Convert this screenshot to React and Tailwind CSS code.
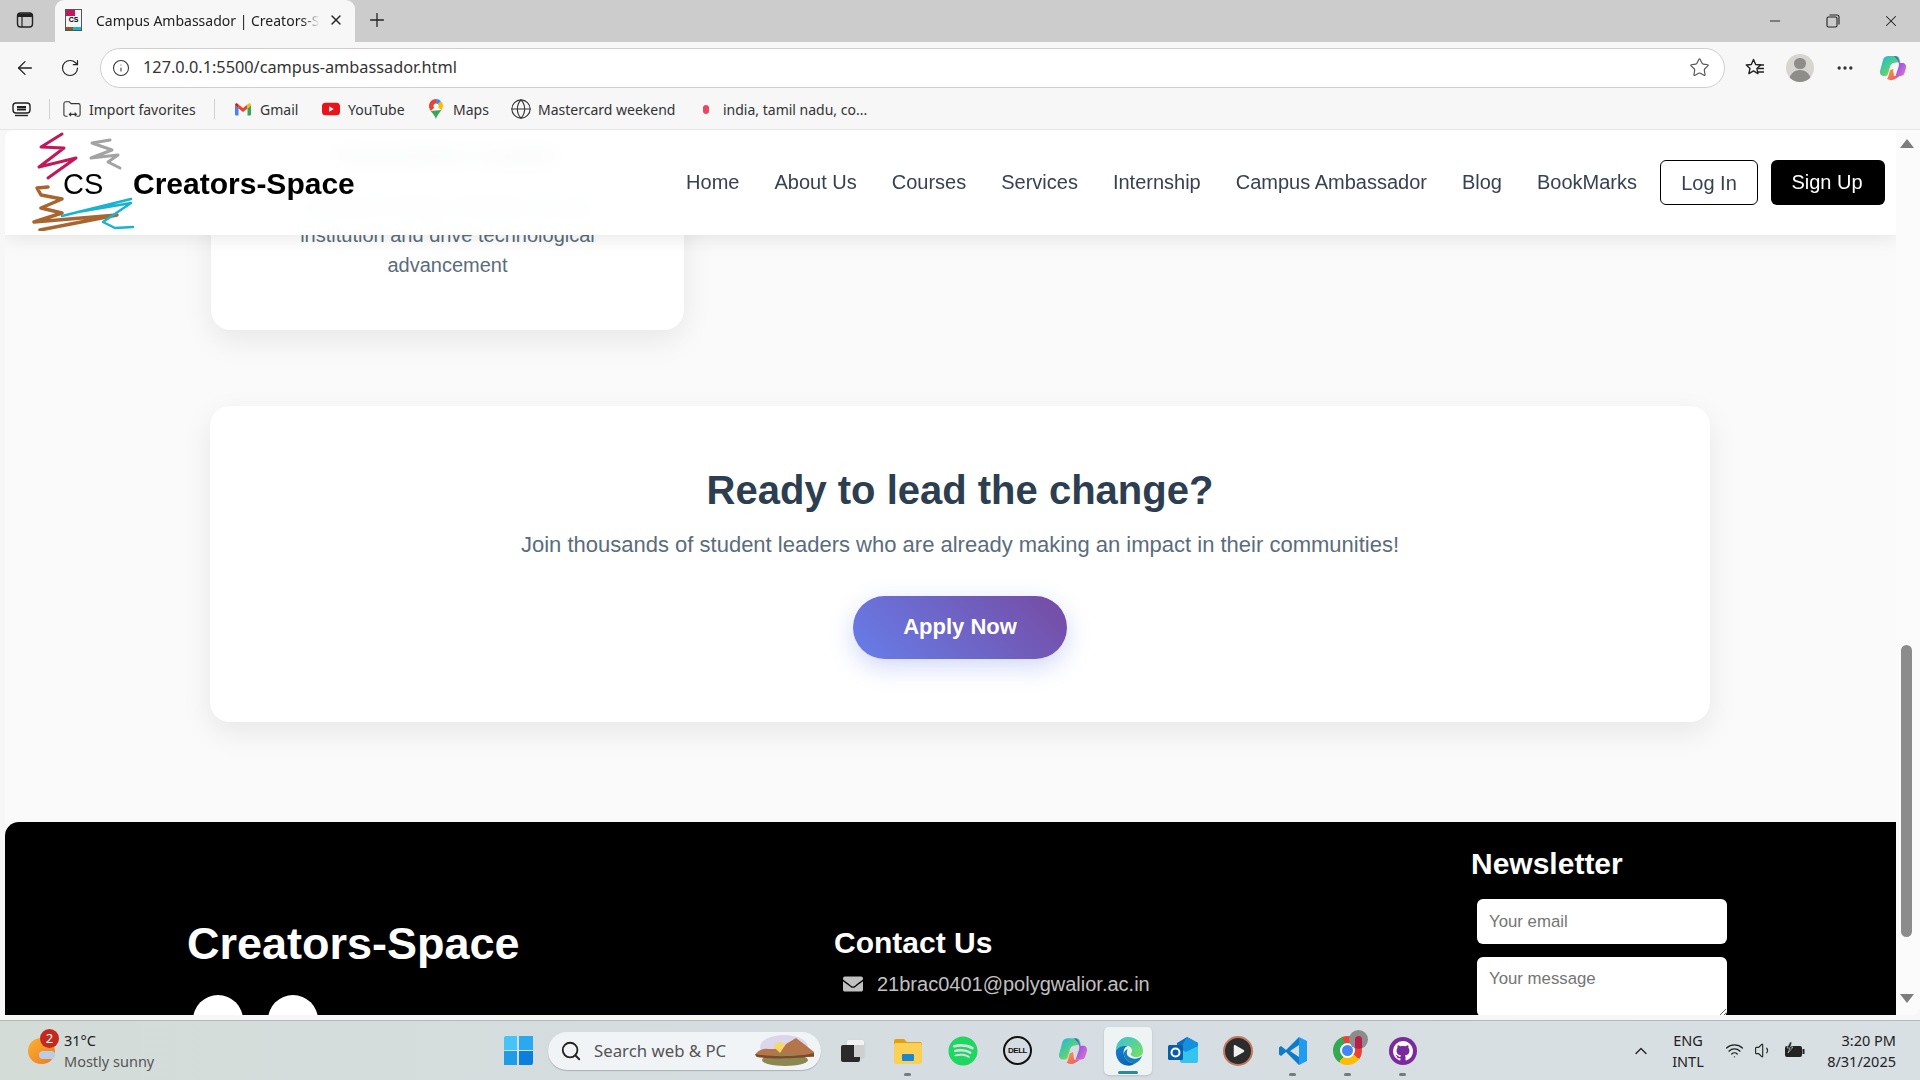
import { ArrowLeft, RotateCw, Info, Star, Plus, X, Minus, Search, ChevronUp, Wifi, Volume1, Globe, MoreHorizontal } from "lucide-react";
import { FaSpotify, FaEnvelope, FaPlay } from "react-icons/fa";
import { VscGithubInverted } from "react-icons/vsc";

const navLinks = ["Home", "About Us", "Courses", "Services", "Internship", "Campus Ambassador", "Blog", "BookMarks"];

// ---- browser chrome drawings ----
const SidebarIcon = () => (
  <svg width="18" height="18" viewBox="0 0 18 18" fill="none">
    <rect x="1.5" y="2" width="15" height="14" rx="3" stroke="#222" strokeWidth="1.4" />
    <path d="M2 3.5 a2 2 0 0 1 2 -1 h10 a2 2 0 0 1 2 1 V6 H2 Z" fill="#222" />
    <path d="M6 6v10" stroke="#222" strokeWidth="1.2" />
  </svg>
);

const RestoreIcon = () => (
  <svg width="14" height="14" viewBox="0 0 14 14" fill="none" stroke="#222" strokeWidth="1.1">
    <rect x="1" y="3" width="10" height="10" rx="1.5" />
    <path d="M3.5 1 h7.5 a2 2 0 0 1 2 2 v7.5" />
  </svg>
);

const FavoritesIcon = () => (
  <svg width="22" height="22" viewBox="0 0 22 22" fill="none" stroke="#222" strokeWidth="1.4" strokeLinejoin="round">
    <path d="M9.5 2.5 l2.2 5 5 .5 -3.8 3.4 1.1 5.2 -4.5 -2.7 -4.6 2.7 1.1 -5.2 -3.7 -3.4 5 -.5 Z" />
    <path d="M15 8h5 M14 11.5h6 M14 15h6" />
  </svg>
);

const CopilotIcon = ({ size = 28 }) => (
  <svg width={size} height={size} viewBox="0 0 28 28">
    <defs>
      <linearGradient id="copA" x1="0" y1="0" x2="1" y2="1">
        <stop offset="0" stopColor="#1fb5e8" />
        <stop offset="0.55" stopColor="#5ad17a" />
        <stop offset="1" stopColor="#f7d046" />
      </linearGradient>
      <linearGradient id="copB" x1="0" y1="0" x2="1" y2="1">
        <stop offset="0" stopColor="#1d5fe0" />
        <stop offset="0.5" stopColor="#a35be0" />
        <stop offset="1" stopColor="#e878c8" />
      </linearGradient>
      <linearGradient id="copC" x1="0" y1="0" x2="1" y2="1">
        <stop offset="0" stopColor="#f5a03c" />
        <stop offset="1" stopColor="#f0487a" />
      </linearGradient>
    </defs>
    <path d="M10 2 h7 c2 0 3 1 3.500 3 l1 3 -7 1 c-2 .5 -3 2 -3.500 4 l-2 7 c-.5 1.500 -1.500 2 -3 2 h-1 c-3 0 -4.500 -2.500 -4 -5 l3 -11 c1 -3 2.500 -4 6.500 -4z" fill="url(#copA)" />
    <path d="M15 2 c2.500 0 4 1 5 4 l1 3 h2.500 c3 0 4 2.500 3.500 5 l-1.500 5 c-.5 2 -2 3 -4 3 h-5 l3 -9 c.8 -3 .5 -4 -1 -7 z" fill="url(#copB)" />
    <path d="M8 25 c3 1.500 6 1.500 8 0 l5 -3 h-6 l-1 -7 -3 1 c-1 3 -1.500 7 -3 9z" fill="url(#copC)" />
  </svg>
);

const Favicon = () => (
  <div className="w-[17px] h-[22px] bg-[#f4f4f4] border border-[#555] flex items-center justify-center relative overflow-hidden">
    <span className="text-[7px] font-bold text-black font-['Liberation_Sans',sans-serif]">CS</span>
    <span className="absolute top-0 left-0 w-[9px] h-[6px] bg-[#c2185b]" />
    <span className="absolute bottom-0 right-0 w-[10px] h-[3px] bg-[#1ab3cf]" />
    <span className="absolute bottom-0 left-0 w-[7px] h-[3px] bg-[#8a5a2b]" />
  </div>
);

const GmailIcon = () => (
  <svg width="16" height="13" viewBox="0 0 16 13">
    <path d="M0 2 v9.500 a1 1 0 0 0 1 1 h2.500 V5.500 Z" fill="#4285f4" />
    <path d="M16 2 v9.500 a1 1 0 0 1 -1 1 h-2.500 V5.500 Z" fill="#34a853" />
    <path d="M3.500 5.500 L8 9 l4.500 -3.500 V1.500 L8 5 3.500 1.500 Z" fill="#ea4335" />
    <path d="M0 2 c0 -1.500 1.800 -2.300 3 -1 l.5 .5 V5.500 Z" fill="#c5221f" />
    <path d="M16 2 c0 -1.500 -1.800 -2.300 -3 -1 l-.5 .5 V5.500 Z" fill="#fbbc04" />
  </svg>
);

const YoutubeIcon = () => (
  <svg width="20" height="14" viewBox="0 0 20 14">
    <rect width="20" height="14" rx="4" fill="#e8131b" />
    <path d="M8 4 l5 3 -5 3 Z" fill="#fff" />
  </svg>
);

const MapsIcon = () => (
  <svg width="14" height="20" viewBox="0 0 14 20">
    <path d="M7 0 C3 0 0 3 0 7 c0 2 .8 3.500 1.800 5 L7 7 Z" fill="#ea4335" />
    <path d="M7 0 c2 0 3.600 .8 5 2.200 L7 7 Z" fill="#4285f4" />
    <path d="M12 2.200 C13.300 3.500 14 5 14 7 c0 1.500 -.6 2.800 -1.500 4 L7 7 Z" fill="#fbbc04" />
    <path d="M1.800 12 L12.500 11 C10.500 14 8 16 7 20 C6 16.500 3.500 14.500 1.800 12 Z" fill="#34a853" />
    <circle cx="7" cy="7" r="2.500" fill="#fff" />
  </svg>
);

const ImportIcon = () => (
  <svg width="20" height="20" viewBox="0 0 20 20" fill="none" stroke="#333" strokeWidth="1.200">
    <path d="M1 16 V4 a2 2 0 0 1 2 -2 h4 l2 2 h8 a2 2 0 0 1 2 2 v10 a2 2 0 0 1 -2 2 h-2 M5 18 H3 a2 2 0 0 1 -2 -2" />
    <path d="M7 16 h8 M9 14 l-2 2 2 2 M13 14 l2 2 -2 2" />
  </svg>
);

const TabsIcon = () => (
  <svg width="20" height="16" viewBox="0 0 20 16" fill="none" stroke="#222" strokeWidth="1.400">
    <rect x="1" y="2" width="17" height="10" rx="3" />
    <path d="M5 6 h9 M5 8.500 h9" strokeWidth="2" />
    <path d="M3 14.500 h13" />
  </svg>
);

// ---- logo ----
const Logo = () => (
  <div className="relative w-[103px] h-[100px] shrink-0 -mt-[3px]">
    <svg width="105" height="100" viewBox="0 0 105 100" fill="none" strokeLinecap="round" strokeLinejoin="round">
      <path d="M32 3 L11 16 L34 17 L9 36 L46 27 L18 47" stroke="#c2185b" strokeWidth="3" />
      <path d="M80 9 L62 12 L82 19 L61 27 L88 24 L78 31 L90 37" stroke="#a3a3a3" strokeWidth="3" />
      <path d="M18 56 L7 57 L11 64 L32 68 L11 77 L32 82 L4 91 L87 84 L10 99" stroke="#a9652f" strokeWidth="3.500" />
      <path d="M32 85 L101 68 L48 81 L101 72 L73 91 L85 97 L103 96" stroke="#1ab3cf" strokeWidth="2.500" />
    </svg>
    <span className="absolute left-[33px] top-[34px] text-[29px] leading-[38px] text-black">CS</span>
  </div>
);

// ---- taskbar drawings ----
const WindowsIcon = () => (
  <div className="grid grid-cols-2 gap-[1.500px] w-[29px] h-[29px]">
    <span className="bg-[#47c4f7] rounded-tl-[2px]" />
    <span className="bg-[#2ba8ef]" />
    <span className="bg-[#1f9be8]" />
    <span className="bg-[#0a7fdc] rounded-br-[2px]" />
  </div>
);

const SearchArt = () => (
  <svg width="62" height="32" viewBox="0 0 62 32">
    <ellipse cx="30" cy="12" rx="24" ry="12" fill="#dcd6ec" />
    <circle cx="26" cy="13" r="6" fill="#f7d765" />
    <path d="M1 20 C3 16 8 13 14 14 L22 14 L26 18 L32 9 L42 3 L50 9 L60 17 L60 22 H3 Z" fill="#b5754a" />
    <ellipse cx="31" cy="25" rx="23" ry="6" fill="#8d8752" />
    <path d="M1 19 C15 22 45 22 60 18 L60 21 C45 24 15 24 3 22 Z" fill="#7a4a2b" />
  </svg>
);

const TaskViewIcon = () => (
  <div className="relative w-[23px] h-[22px]">
    <span className="absolute right-0 top-0 w-[17px] h-[17px] bg-[#f3f3f3] rounded-[2px] shadow-sm" />
    <span className="absolute left-0 bottom-0 w-[19px] h-[17px] bg-[#2a2a2a] rounded-[2px]" />
    <span className="absolute right-0 top-[5px] w-[10px] h-[12px] bg-[#cfcfcf]" />
  </div>
);

const FolderIcon = () => (
  <svg width="30" height="28" viewBox="0 0 30 28">
    <path d="M1 4 a2 2 0 0 1 2 -2 h8 l3 3 h13 a2 2 0 0 1 2 2 v3 H1 Z" fill="#e0a012" />
    <rect x="1" y="6" width="28" height="21" rx="2" fill="#fbd155" />
    <rect x="9" y="17" width="12" height="7" rx="1" fill="#1a86d8" />
  </svg>
);

const DellIcon = () => (
  <div className="w-[29px] h-[29px] rounded-full border-2 border-[#111] flex items-center justify-center">
    <span className="text-[8px] font-bold tracking-[-0.5px] text-[#111] font-['Liberation_Sans',sans-serif]">DELL</span>
  </div>
);

const EdgeIcon = () => (
  <svg width="30" height="30" viewBox="0 0 30 30">
    <defs>
      <linearGradient id="edgeA" x1="0" y1="0" x2="1" y2="1">
        <stop offset="0" stopColor="#36c3d8" />
        <stop offset="1" stopColor="#7be05a" />
      </linearGradient>
      <linearGradient id="edgeB" x1="0" y1="0" x2="1" y2="1">
        <stop offset="0" stopColor="#1680d0" />
        <stop offset="1" stopColor="#0c5aa6" />
      </linearGradient>
    </defs>
    <path d="M15 1 C24 1 30 8 30 15 C30 19 27 21 23 21 C19 21 17 19 18 17 C20 15 19 11 15 10 C10 9 6 11 3 14 C3 7 8 1 15 1 Z" fill="url(#edgeA)" />
    <path d="M3 14 C6 10 11 9 15 10 C11 11 10 15 11 19 C12 24 17 28 23 27 C20 29 17 30 14 29.500 C7 29 2 22 3 14 Z" fill="url(#edgeB)" />
    <path d="M11 19 C12 24 17 28 23 27 C26 25 28 23 29 20 C26 23 19 24 15 20 C13 18 14 14 15 13 C12 14 10.500 16 11 19 Z" fill="#0f7fc0" />
  </svg>
);

const OutlookIcon = () => (
  <svg width="30" height="28" viewBox="0 0 30 28">
    <path d="M9 6 L19 0 L30 6 V12 H9 Z" fill="#0f6cbd" />
    <path d="M12 14 L30 9 V24 a2 2 0 0 1 -2 2 H14 a2 2 0 0 1 -2 -2 Z" fill="#35c4f0" />
    <path d="M19 0 L30 6 V9 L18 15 L12 12 Z" fill="#1490df" />
    <rect x="0" y="8" width="15" height="15" rx="1.500" fill="#0a5ea8" />
    <circle cx="7.500" cy="15.500" r="4" fill="none" stroke="#fff" strokeWidth="2" />
  </svg>
);

const VscodeIcon = () => (
  <svg width="30" height="30" viewBox="0 0 30 30">
    <path d="M21 1 L29 5 V25 L21 29 Z" fill="#1f9cf0" />
    <path d="M21 1 L8 14 L3 10 L1 11.500 V18.500 L3 20 L8 16 L21 29 V21 L12 15 L21 9 Z" fill="#0f7ac6" />
  </svg>
);

const ChromeIcon = () => (
  <div className="relative">
    <div className="w-[29px] h-[29px] rounded-full bg-[conic-gradient(#ea4335_0deg_125deg,#fbbc04_125deg_215deg,#34a853_215deg_340deg,#ea4335_340deg)] flex items-center justify-center">
      <div className="w-[15px] h-[15px] rounded-full bg-white flex items-center justify-center">
        <div className="w-[11px] h-[11px] rounded-full bg-[#4285f4]" />
      </div>
    </div>
    <div className="absolute -top-[6px] -right-[6px] w-[19px] h-[19px] rounded-full bg-[#8c8c8c] flex items-end justify-center overflow-hidden">
      <span className="w-[7px] h-[13px] rounded-t-full bg-[#b81e4a]" />
    </div>
  </div>
);

const TaskIcon = ({ children, dot, active }) => (
  <div className={`relative w-[48px] h-[48px] mx-[3.5px] rounded-[5px] flex items-center justify-center ${active ? "bg-[#eef3f4] shadow-sm" : ""}`}>
    {children}
    {dot && <span className="absolute bottom-[-1px] w-[7px] h-[3px] rounded-full bg-[#737b7e]" />}
    {active && <span className="absolute bottom-[1px] w-[20px] h-[3px] rounded-full bg-[#2a8a9c]" />}
  </div>
);

const BookmarkItem = ({ icon, label, width }) => (
  <div className={`flex items-center gap-[8px] ${width}`}>
    <span className="w-[18px] flex justify-center shrink-0">{icon}</span>
    <span className="text-[14px] text-[#333] whitespace-nowrap">{label}</span>
  </div>
);

export default function App() {
  return (
    <div className="w-[1920px] h-[1080px] overflow-hidden flex flex-col bg-[#f7f7f7] font-['Noto_Sans',sans-serif]">
      {/* tab strip */}
      <div className="h-[42px] shrink-0 bg-[#cccccc] flex items-end">
        <div className="w-[55px] h-[42px] flex items-center justify-center pr-[6px] pb-[2px]">
          <SidebarIcon />
        </div>
        <div className="w-[300px] h-[42px] bg-[#f7f7f7] rounded-t-[9px] flex items-center pl-[10px] pr-[11px] pb-[2px]">
          <Favicon />
          <span className="ml-[14px] w-[224px] overflow-hidden whitespace-nowrap text-[14px] text-[#222] [mask-image:linear-gradient(90deg,#000_92%,transparent)]">
            Campus Ambassador | Creators-Space
          </span>
          <X size={16} strokeWidth={2} className="ml-auto text-[#222]" />
        </div>
        <div className="w-[44px] h-[42px] flex items-center justify-center pb-[2px]">
          <Plus size={22} strokeWidth={1.4} className="text-[#222]" />
        </div>
        <div className="ml-auto h-[42px] flex items-center text-[#222]">
          <div className="w-[58px] flex justify-center"><Minus size={16} strokeWidth={1.4} /></div>
          <div className="w-[58px] flex justify-center"><RestoreIcon /></div>
          <div className="w-[58px] flex justify-center"><X size={18} strokeWidth={1.4} /></div>
        </div>
      </div>

      {/* address bar */}
      <div className="h-[46px] shrink-0 bg-[#f7f7f7] flex items-center pt-[5px]">
        <div className="w-[50px] flex justify-center"><ArrowLeft size={22} strokeWidth={1.4} className="text-[#222]" /></div>
        <div className="w-[50px] flex justify-center -ml-[5px]"><RotateCw size={20} strokeWidth={1.4} className="text-[#222]" /></div>
        <div className="w-[1625px] ml-[5px] h-[40px] bg-white rounded-full border border-[#cfcfcf] flex items-center pl-[11px] pr-[14px]">
          <Info size={18} strokeWidth={1.4} className="text-[#333]" />
          <span className="ml-[13px] text-[16.3px] text-[#333]">127.0.0.1:5500/campus-ambassador.html</span>
          <Star size={21} strokeWidth={1.3} className="ml-auto text-[#555]" />
        </div>
        <div className="w-[60px] flex justify-center"><FavoritesIcon /></div>
        <div className="w-[30px] flex justify-center">
          <div className="w-[28px] h-[28px] rounded-full bg-[#d6d5d2] overflow-hidden flex flex-col items-center">
            <span className="mt-[4px] w-[12px] h-[12px] rounded-full bg-[#8f8d8a]" />
            <span className="mt-[1px] w-[22px] h-[12px] rounded-t-full bg-[#8f8d8a]" />
          </div>
        </div>
        <div className="w-[60px] flex justify-center"><MoreHorizontal size={20} className="text-[#333]" /></div>
        <div className="w-[36px] flex justify-center"><CopilotIcon /></div>
      </div>

      {/* favorites bar */}
      <div className="h-[42px] shrink-0 bg-[#f7f7f7] border-b border-[#e6e6e6] flex items-center pl-[12px] pt-[1px]">
        <TabsIcon />
        <span className="ml-[17px] w-px h-[20px] bg-[#d0d0d0]" />
        <div className="ml-[13px] w-[152px] flex items-center">
          <BookmarkItem icon={<ImportIcon />} label="Import favorites" />
          <span className="ml-auto w-px h-[20px] bg-[#d0d0d0]" />
        </div>
        <BookmarkItem icon={<GmailIcon />} label="Gmail" width="ml-[19px] w-[88px]" />
        <BookmarkItem icon={<YoutubeIcon />} label="YouTube" width="w-[105px]" />
        <BookmarkItem icon={<MapsIcon />} label="Maps" width="w-[85px]" />
        <BookmarkItem icon={<Globe size={22} strokeWidth={1.2} className="text-[#333] shrink-0" />} label="Mastercard weekend" width="w-[185px]" />
        <BookmarkItem icon={<span className="w-[6px] h-[9px] rounded-full bg-[#e8475f]" />} label="india, tamil nadu, co..." />
      </div>

      {/* page viewport */}
      <div className="h-[885px] shrink-0 flex pl-[5px]">
        <div className="relative flex-1 overflow-hidden bg-[#fafafa] rounded-tl-[8px] font-['Liberation_Sans',sans-serif]">
          <nav className="absolute top-0 left-0 right-0 z-10 h-[105px] bg-white/95 backdrop-blur-[10px] shadow-[0_2px_20px_rgba(0,0,0,0.1)] flex items-center pl-[25px] pr-[11px]">
            <Logo />
            <span className="text-[30px] font-bold text-black mt-[1px]">Creators-Space</span>
            <div className="ml-auto flex items-center gap-[35px] mr-[24px] -mt-[2px] translate-x-[1px]">
              {navLinks.map((link) => (
                <a key={link} className="text-[20px] text-[#374151] whitespace-nowrap">{link}</a>
              ))}
            </div>
            <div className="flex items-center gap-[13px]">
              <button className="w-[98px] h-[45px] rounded-[6px] border border-black bg-white text-[20px] text-[#374151]">Log In</button>
              <button className="w-[114px] h-[45px] rounded-[6px] bg-black text-[20px] text-white pr-[2px] pb-[2px]">Sign Up</button>
            </div>
          </nav>

          <div className="pl-[205px] pr-[186px]">
            {/* role card, scrolled mostly out of view */}
            <div className="ml-[1px] w-[473px] h-[200px] bg-white rounded-b-[20px] shadow-[0_10px_30px_rgba(0,0,0,0.08)] flex flex-col items-center pt-[11px] text-center">
              <h3 className="text-[26px] leading-[28px] font-bold text-[#2c3e50]">Innovation Leader</h3>
              <p className="mt-[21px] text-[20px] leading-[30px] text-[#5a6c7d]">
                Lead technology initiatives at your
                <br />
                institution and drive technological
                <br />
                advancement
              </p>
            </div>

            {/* call to action */}
            <div className="mt-[76px] h-[316px] bg-white rounded-[20px] shadow-[0_10px_30px_rgba(0,0,0,0.08)] flex flex-col items-center pt-[58px]">
              <h2 className="text-[40px] leading-[52px] font-bold text-[#2c3e50]">Ready to lead the change?</h2>
              <p className="mt-[15px] text-[22px] leading-[28px] text-[#5a6c7d]">
                Join thousands of student leaders who are already making an impact in their communities!
              </p>
              <button className="mt-[37px] w-[214px] h-[63px] rounded-full bg-[linear-gradient(45deg,#667eea,#764ba2)] shadow-[0_8px_25px_rgba(102,126,234,0.3)] text-[22px] font-bold text-white pb-[2px]">
                Apply Now
              </button>
            </div>
          </div>

          {/* footer */}
          <footer className="mt-[100px] h-[400px] bg-black rounded-tl-[14px] flex pl-[182px]">
            <div className="w-[647px] pt-[92px]">
              <h2 className="text-[45px] leading-[60px] font-bold text-white">Creators-Space</h2>
              <div className="mt-[21px] ml-[6px] flex gap-[25px]">
                <span className="w-[50px] h-[50px] rounded-full bg-white" />
                <span className="w-[50px] h-[50px] rounded-full bg-white" />
              </div>
            </div>
            <div className="w-[637px] pt-[100px]">
              <h3 className="text-[30px] leading-[42px] font-bold text-white">Contact Us</h3>
              <div className="mt-[5px] ml-[9px] flex items-center gap-[14px]">
                <FaEnvelope size={20} className="text-[#c0c0c0]" />
                <span className="text-[20px] text-[#c0c0c0]">21brac0401@polygwalior.ac.in</span>
              </div>
            </div>
            <div className="pt-[22px]">
              <h3 className="text-[30px] leading-[40px] font-bold text-white">Newsletter</h3>
              <div className="ml-[6px] mt-[15px] w-[250px] flex flex-col gap-[13px]">
                <input placeholder="Your email" className="w-full h-[45px] rounded-[6px] bg-white px-[12px] text-[16.8px] placeholder:text-[#757575]" />
                <textarea placeholder="Your message" className="w-full h-[60px] rounded-[6px] bg-white px-[12px] pt-[9px] text-[16.8px] placeholder:text-[#757575]" />
              </div>
            </div>
          </footer>
        </div>

        {/* scrollbar */}
        <div className="relative w-[24px] shrink-0 bg-[#fbfbfb] rounded-br-[8px] flex flex-col items-center">
          <span className="mt-[9px] mr-[3px] w-0 h-0 border-x-[7px] border-x-transparent border-b-[9px] border-b-[#7d7d7d]" />
          <span className="mt-[497px] mr-[4px] w-[11px] h-[292px] rounded-full bg-[#8c8c8c]" />
          <span className="mt-[57px] mr-[3px] w-0 h-0 border-x-[7px] border-x-transparent border-t-[9px] border-t-[#7d7d7d]" />
        </div>
      </div>

      {/* strip under the page */}
      <div className="h-[5px] shrink-0 bg-[#f7f7f7]" />

      {/* windows taskbar */}
      <div className="h-[60px] shrink-0 border-t border-[#b4b8b9] bg-[linear-gradient(90deg,#d4dcd8,#d6dde2_50%,#d8e0e3)] flex items-center">
        <div className="w-[488px] pl-[28px] flex items-center">
          <div className="relative w-[27px] h-[26px]">
            <span className="absolute inset-0 rounded-full bg-[linear-gradient(135deg,#f9b233,#ee7a1c)]" />
            <span className="absolute -right-[4px] -top-[9px] w-[19px] h-[19px] rounded-full bg-[#c5281c] text-white text-[13px] leading-[19px] text-center">2</span>
            <span className="absolute right-0 bottom-[5px] w-[16px] h-[8px] rounded-full bg-[#b9cdea]" />
          </div>
          <div className="ml-[9px] text-[14.5px] leading-[21px] text-[#333]">
            <div className="text-[#222]">31°C</div>
            <div className="text-[#555]">Mostly sunny</div>
          </div>
        </div>
        <div className="w-[60px] flex justify-center"><WindowsIcon /></div>
        <div className="w-[273px] h-[38px] bg-[#f1f4f6] rounded-full shadow-[0_1px_1px_rgba(0,0,0,0.2)] flex items-center pl-[12px] pr-[5px]">
          <Search size={22} strokeWidth={2} className="text-[#222]" />
          <span className="ml-[12px] text-[16.8px] text-[#555]">Search web &amp; PC</span>
          <span className="ml-auto"><SearchArt /></span>
        </div>
        <div className="flex items-center ml-[4px]">
          <TaskIcon><TaskViewIcon /></TaskIcon>
          <TaskIcon dot><FolderIcon /></TaskIcon>
          <TaskIcon><FaSpotify size={30} className="text-[#1ed760]" /></TaskIcon>
          <TaskIcon><DellIcon /></TaskIcon>
          <TaskIcon><CopilotIcon size={30} /></TaskIcon>
          <TaskIcon active><EdgeIcon /></TaskIcon>
          <TaskIcon><OutlookIcon /></TaskIcon>
          <TaskIcon>
            <div className="w-[30px] h-[30px] rounded-full bg-[#2c2c2c] border-[2.500px] border-[#c0785c] flex items-center justify-center">
              <FaPlay size={12} className="text-[#f0f0f0] ml-[2px]" />
            </div>
          </TaskIcon>
          <TaskIcon dot><VscodeIcon /></TaskIcon>
          <TaskIcon dot><ChromeIcon /></TaskIcon>
          <TaskIcon dot>
            <div className="w-[28px] h-[28px] rounded-full bg-[#7b2a9e] flex items-center justify-center">
              <VscGithubInverted size={20} className="text-white" />
            </div>
          </TaskIcon>
        </div>
        <div className="ml-auto flex items-center pr-[24px]">
          <ChevronUp size={20} strokeWidth={1.6} className="text-[#222]" />
          <div className="ml-[20px] w-[34px] text-center text-[14.5px] leading-[21px] text-[#222]">
            <div>ENG</div>
            <div>INTL</div>
          </div>
          <div className="ml-[20px] flex items-center text-[#222]">
            <Wifi size={19} strokeWidth={1.6} className="mr-[10px]" />
            <Volume1 size={19} strokeWidth={1.4} className="mr-[11px]" />
            <svg width="22" height="18" viewBox="0 0 22 18" fill="#222">
              <rect x="1" y="4" width="17" height="11" rx="2" />
              <rect x="18.500" y="7" width="2" height="5" />
              <path d="M6 0 L3 6 H6 L4 11 L9 5 H6.500 L8 0 Z" stroke="#d6dde2" strokeWidth=".6" />
            </svg>
          </div>
          <div className="ml-[10px] w-[80px] text-right text-[14.5px] leading-[21px] text-[#222]">
            <div>3:20 PM</div>
            <div>8/31/2025</div>
          </div>
        </div>
      </div>
    </div>
  );
}
